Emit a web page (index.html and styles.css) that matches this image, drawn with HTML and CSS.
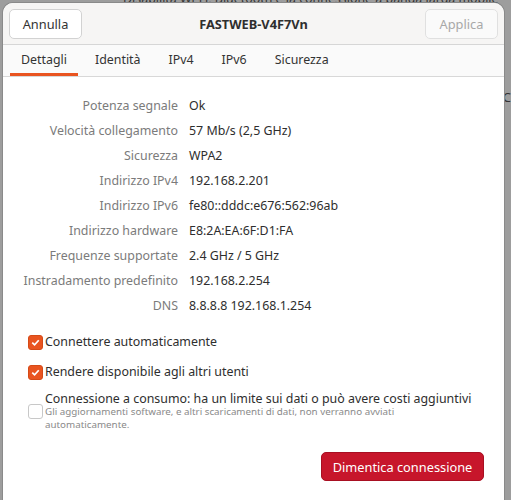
FILE: index.html
```html
<!DOCTYPE html>
<html lang="it">
<head>
    <meta charset="UTF-8">
    <title>FASTWEB-V4F7Vn</title>
    <link rel="stylesheet" href="styles.css">
</head>
<body>
    <div class="backdrop">
        <p class="backdrop-text">Disabilita Wi-Fi, Bluetooth e la connessione a banda larga mobile</p>
        <span class="backdrop-c">C</span>
    </div>

    <div class="dialog">
        <header class="header">
            <button class="btn">Annulla</button>
            <h1 class="title">FASTWEB-V4F7Vn</h1>
            <button class="btn btn-disabled">Applica</button>
        </header>

        <nav class="tabs">
            <a class="tab active">Dettagli</a>
            <a class="tab">Identità</a>
            <a class="tab">IPv4</a>
            <a class="tab">IPv6</a>
            <a class="tab">Sicurezza</a>
        </nav>

        <div class="content">
            <dl class="details">
                <dt>Potenza segnale</dt><dd>Ok</dd>
                <dt>Velocità collegamento</dt><dd>57 Mb/s (2,5 GHz)</dd>
                <dt>Sicurezza</dt><dd>WPA2</dd>
                <dt>Indirizzo IPv4</dt><dd>192.168.2.201</dd>
                <dt>Indirizzo IPv6</dt><dd>fe80::dddc:e676:562:96ab</dd>
                <dt>Indirizzo hardware</dt><dd>E8:2A:EA:6F:D1:FA</dd>
                <dt>Frequenze supportate</dt><dd>2.4 GHz / 5 GHz</dd>
                <dt>Instradamento predefinito</dt><dd>192.168.2.254</dd>
                <dt>DNS</dt><dd>8.8.8.8 192.168.1.254</dd>
            </dl>

            <div class="options">
                <label class="check">
                    <span class="box checked"><svg viewBox="0 0 14 14"><path d="M3.5 7.2 L6 9.6 L10.5 4.6" /></svg></span>
                    <span>Connettere automaticamente</span>
                </label>
                <label class="check">
                    <span class="box checked"><svg viewBox="0 0 14 14"><path d="M3.5 7.2 L6 9.6 L10.5 4.6" /></svg></span>
                    <span>Rendere disponibile agli altri utenti</span>
                </label>
                <label class="check check-multi">
                    <span class="box"></span>
                    <span class="check-text">
                        <span class="check-title">Connessione a consumo: ha un limite sui dati o può avere costi aggiuntivi</span>
                        <small>Gli aggiornamenti software, e altri scaricamenti di dati, non verranno avviati automaticamente.</small>
                    </span>
                </label>
            </div>

            <div class="footer">
                <button class="btn-danger">Dimentica connessione</button>
            </div>
        </div>
    </div>
</body>
</html>
```

FILE: styles.css
```css
body {
    margin: 0;
    padding: 3px 7px 0 3px;
    background-color: #9d9d9d;
    font-family: "Noto Sans", sans-serif;
    font-size: 12.4px;
    color: #3d3d3d;
    height: 500px;
    box-sizing: border-box;
    overflow: hidden;
    position: relative;
}
.backdrop {
    position: absolute;
    inset: 0;
}
.backdrop-text {
    position: absolute;
    top: -10px;
    left: 123px;
    margin: 0;
    font-size: 12.4px;
    color: #333;
    white-space: nowrap;
}
.backdrop-c {
    position: absolute;
    top: 88px;
    right: 0;
    font-size: 13px;
    color: #333;
}
.dialog {
    position: relative; /* fica por cima do fundo */
    background-color: #ffffff;
    border-radius: 10px 10px 0 0;
    height: 100%;
    overflow: hidden;
    box-shadow: 0 0 0 1px #8a8a8a;
}
.header {
    height: 41px;
    background-color: #f6f5f4;
    border-bottom: 1px solid #d6d6d6;
    display: flex;
    align-items: center;
    justify-content: space-between;
    padding: 0 6px;
}
.title {
    margin: 0;
    font-size: 12.8px;
    font-weight: bold;
    color: #2e2e2e;
}
.btn {
    width: 73px;
    height: 30px;
    background-color: #ffffff;
    border: 1px solid #d2d2d2;
    border-radius: 5px;
    font-family: inherit;
    font-size: 12.8px;
    color: #333;
    padding: 0;
}
.btn-disabled {
    color: #a8a8a8;
    background-color: #fafafa;
    border-color: #e0e0e0;
}
.tabs {
    height: 32px;
    background-color: #fafafa;
    border-bottom: 1px solid #d8d8d8;
    display: flex;
    padding-left: 7px;
    box-sizing: border-box;
}
.tab {
    padding: 6px 11px 0;
    margin-right: 6px;
    color: #333;
    box-sizing: border-box;
    border-bottom: 3px solid transparent;
}
.tab.active {
    border-bottom-color: #e95420;
}
.content {
    padding-top: 16px;
}
.details {
    display: grid;
    grid-template-columns: 175px 1fr;
    column-gap: 11px;
    row-gap: 0;
    margin: 0;
}
.details dt,
.details dd {
    margin: 0;
    height: 25px;
    line-height: 25px;
}
.details dt {
    text-align: right;
    color: #7b7b7b;
}
.details dd {
    color: #2e2e2e;
}
.options {
    margin-top: 15px;
    padding-left: 25px;
    display: flex;
    flex-direction: column;
    gap: 12px;
}
.check {
    display: flex;
    align-items: center;
    gap: 2px;
    color: #2e2e2e;
    line-height: 18px;
}
.box {
    width: 13px;
    height: 13px;
    border: 1px solid #c8c8c8;
    border-radius: 3px;
    background-color: #fff;
    flex-shrink: 0;
}
.box.checked {
    background-color: #e95420;
    border-color: #d54a17;
}
.box svg {
    display: block;
    width: 13px;
    height: 13px;
}
.box path {
    fill: none;
    stroke: #fff;
    stroke-width: 1.8;
}
.check-multi {
    margin-top: -1px;
}
.check-text {
    display: flex;
    flex-direction: column;
}
.check-title {
    line-height: 14px;
}
.check-text small {
    max-width: 360px;
    font-size: 9.8px;
    line-height: 12.5px;
    color: #8a8a8a;
}
.footer {
    display: flex;
    justify-content: flex-end;
    padding: 21px 20px 0 0;
}
.btn-danger {
    width: 163px;
    height: 29px;
    background-color: #c7162b;
    color: white;
    border: 1px solid #a80f22;
    border-radius: 5px;
    font-family: inherit;
    font-size: 12.8px;
    padding: 0;
}
```
